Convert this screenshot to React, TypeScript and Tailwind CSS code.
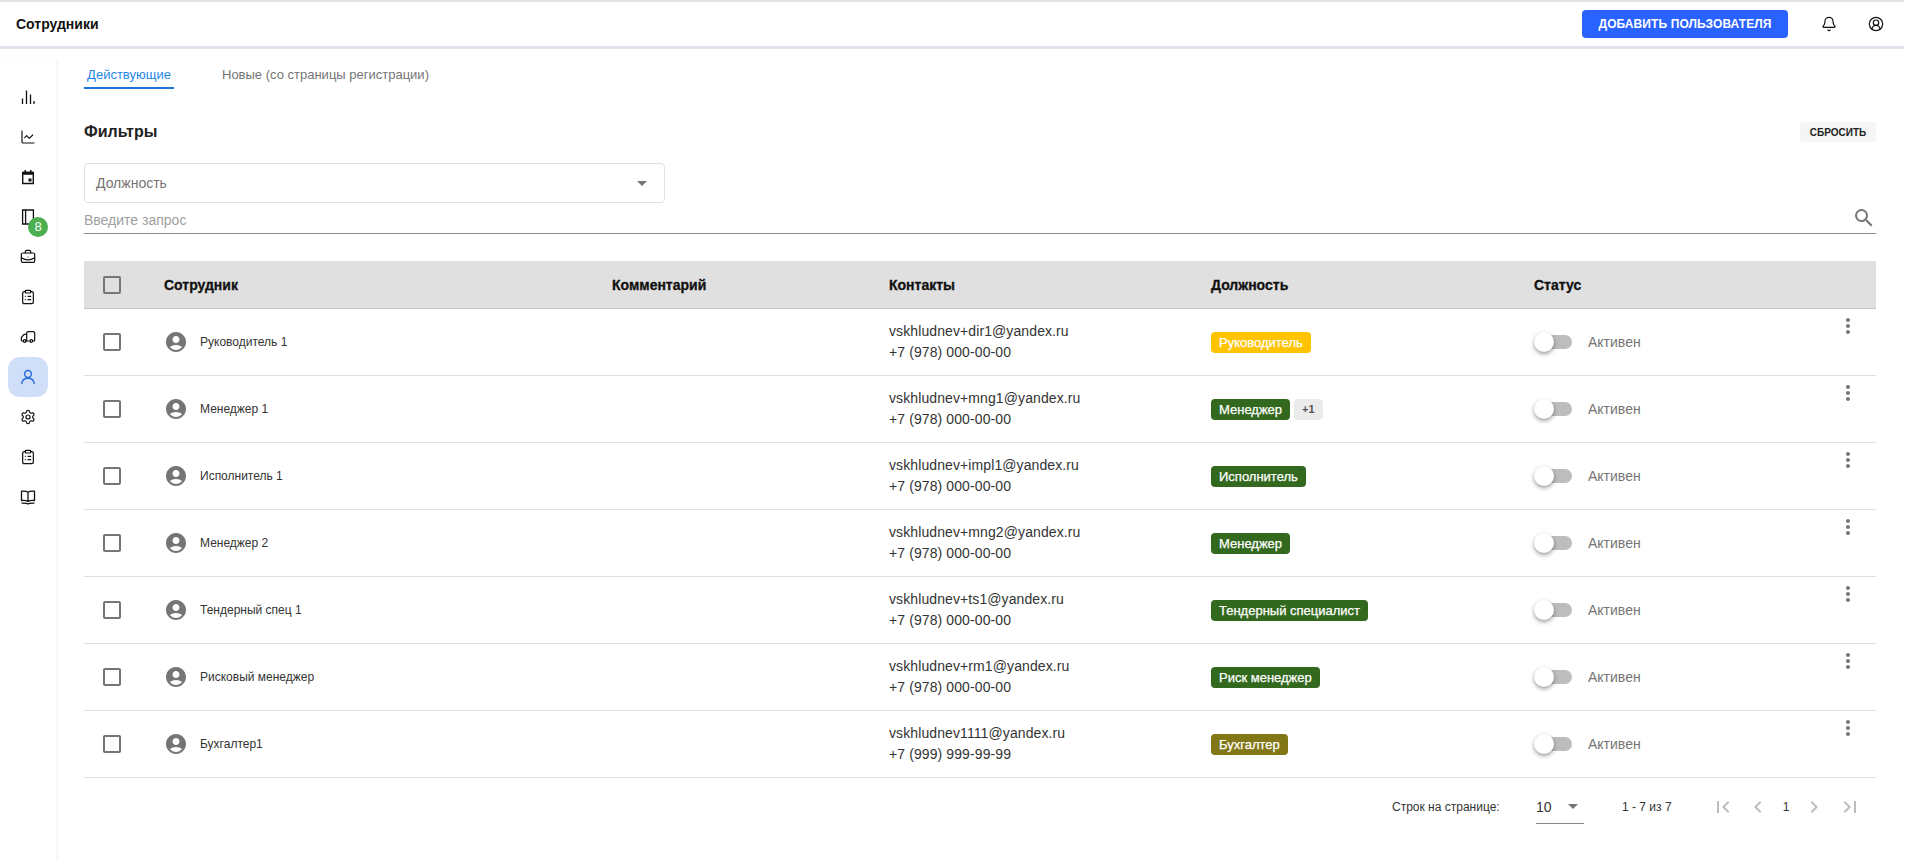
import { BriefcaseBusiness, ChartLine, ClipboardList, Settings, Truck, Bell, CircleUserRound } from "lucide-react";
import { MdAccountCircle, MdChevronLeft, MdChevronRight, MdFirstPage, MdLastPage, MdMoreVert, MdSearch } from "react-icons/md";

type Employee = {
  name: string;
  email: string;
  phone: string;
  role: string;
  color: string;
  extra?: string;
};

const employees: Employee[] = [
  { name: "Руководитель 1", email: "vskhludnev+dir1@yandex.ru", phone: "+7 (978) 000-00-00", role: "Руководитель", color: "bg-[#ffc300]" },
  { name: "Менеджер 1", email: "vskhludnev+mng1@yandex.ru", phone: "+7 (978) 000-00-00", role: "Менеджер", color: "bg-[#33691e]", extra: "+1" },
  { name: "Исполнитель 1", email: "vskhludnev+impl1@yandex.ru", phone: "+7 (978) 000-00-00", role: "Исполнитель", color: "bg-[#33691e]" },
  { name: "Менеджер 2", email: "vskhludnev+mng2@yandex.ru", phone: "+7 (978) 000-00-00", role: "Менеджер", color: "bg-[#33691e]" },
  { name: "Тендерный спец 1", email: "vskhludnev+ts1@yandex.ru", phone: "+7 (978) 000-00-00", role: "Тендерный специалист", color: "bg-[#33691e]" },
  { name: "Рисковый менеджер", email: "vskhludnev+rm1@yandex.ru", phone: "+7 (978) 000-00-00", role: "Риск менеджер", color: "bg-[#33691e]" },
  { name: "Бухгалтер1", email: "vskhludnev1111@yandex.ru", phone: "+7 (999) 999-99-99", role: "Бухгалтер", color: "bg-[#827717]" },
];

const gridCols = "grid grid-cols-[80px_448px_277px_322px_323px_1fr_40px]";

function BarsIcon() {
  return (
    <svg width="16" height="16" viewBox="0 0 16 16" fill="none" stroke="#111" strokeWidth="1.300">
      <path d="M2.500 15V9.500M6.500 15V1.500M10.500 15V5.500M14 15v-3" />
    </svg>
  );
}

function CalendarIcon() {
  return (
    <svg width="16" height="16" viewBox="0 0 16 16" fill="none">
      <path d="M2.700 3.500h10.600v11H2.700z" stroke="#111" strokeWidth="1.400" />
      <path d="M2.700 2.800h10.600v3H2.700zM4.500 1h1.400v2H4.500zM10.100 1h1.400v2h-1.400zM8.500 9.500h3v3h-3z" fill="#111" />
    </svg>
  );
}

function NotebookIcon() {
  return (
    <svg width="16" height="16" viewBox="0 0 16 16" fill="none" stroke="#111" strokeWidth="1.300">
      <path d="M2.600 1h10.800v14H2.600zM5.600 1v14" />
    </svg>
  );
}

function BookIcon() {
  return (
    <svg width="16" height="16" viewBox="0 0 16 16" fill="none" stroke="#111" strokeWidth="1.300" strokeLinejoin="round">
      <path d="M8 3.200C6.600 2.200 4.200 2 1.500 2.200v9.300c2.700-.2 5.100 0 6.500 1 1.400-1 3.800-1.200 6.500-1V2.200C11.800 2 9.400 2.200 8 3.200zM8 3.200v9.300M1.500 14.200c2.500-.3 5 0 6.500.7 1.500-.7 4-1 6.500-.7" />
    </svg>
  );
}

function UserIcon() {
  return (
    <svg width="16" height="16" viewBox="0 0 16 16" fill="none" stroke="#2a6fdb" strokeWidth="1.500" strokeLinecap="round">
      <circle cx="8" cy="5" r="3.400" />
      <path d="M1.800 14.500c.4-3.300 2.800-5.300 6.200-5.300s5.800 2 6.200 5.300" />
    </svg>
  );
}

function SideItem({ children, active, badge }: { children: React.ReactNode; active?: boolean; badge?: string }) {
  return (
    <div className={`relative flex h-10 w-10 items-center justify-center rounded-xl ${active ? "bg-[#d0dff7]" : ""}`}>
      {children}
      {badge && (
        <span className="absolute left-[20px] top-[20px] flex h-5 w-5 items-center justify-center rounded-full bg-[#4caf50] text-[13px] font-medium text-white">
          {badge}
        </span>
      )}
    </div>
  );
}

function Sidebar() {
  return (
    <aside className="flex w-[57px] shrink-0 flex-col items-center border-r border-[#f5f5f5] pt-[17px] shadow-[0_0_4px_rgba(0,0,0,0.04)]">
      <SideItem><BarsIcon /></SideItem>
      <SideItem><ChartLine size={16} strokeWidth={1.8} color="#111" /></SideItem>
      <SideItem><CalendarIcon /></SideItem>
      <SideItem badge="8"><NotebookIcon /></SideItem>
      <SideItem><BriefcaseBusiness size={16} strokeWidth={1.8} color="#111" /></SideItem>
      <SideItem><ClipboardList size={16} strokeWidth={1.8} color="#111" /></SideItem>
      <SideItem><Truck size={16} strokeWidth={1.8} color="#111" className="-scale-x-100" /></SideItem>
      <SideItem active><UserIcon /></SideItem>
      <SideItem><Settings size={16} strokeWidth={1.8} color="#111" /></SideItem>
      <SideItem><ClipboardList size={16} strokeWidth={1.8} color="#111" /></SideItem>
      <SideItem><BookIcon /></SideItem>
    </aside>
  );
}

function Checkbox() {
  return <div className="h-[18px] w-[18px] rounded-[2px] border-2 border-[#757575]" />;
}

function Toggle() {
  return (
    <div className="relative ml-[3px] h-[14px] w-[35px] rounded-full bg-[#bdbdbd]">
      <div className="absolute left-[-3px] top-[-3px] h-5 w-5 rounded-full bg-white shadow-[0_2px_4px_rgba(0,0,0,0.4)]" />
    </div>
  );
}

function Row({ e }: { e: Employee }) {
  return (
    <div className={`${gridCols} h-[67px] items-center border-b border-[#e0e0e0]`}>
      <div className="pl-[19px]"><Checkbox /></div>
      <div className="flex items-center gap-[12px]">
        <MdAccountCircle size={24} color="#757575" />
        <span className="text-xs text-[#333]">{e.name}</span>
      </div>
      <div />
      <div className="text-sm leading-[21px] tracking-[0.1px] text-[#333]">
        <div>{e.email}</div>
        <div>{e.phone}</div>
      </div>
      <div className="flex items-center gap-1">
        <span className={`rounded-[4px] px-2 text-[13px] leading-[21px] text-white [-webkit-text-stroke:0.25px_white] ${e.color}`}>{e.role}</span>
        {e.extra && <span className="rounded-[4px] bg-[#ebebeb] px-2 text-[11px] leading-[21px] font-bold text-[#555]">{e.extra}</span>}
      </div>
      <div className="flex items-center gap-[16px]">
        <Toggle />
        <span className="text-sm text-[#757575]">Активен</span>
      </div>
      <div className="self-start pt-[5px]">
        <MdMoreVert size={24} color="#757575" />
      </div>
    </div>
  );
}

export default function App() {
  return (
    <div className="h-[861px] w-[1911px] overflow-hidden bg-white pr-[7px] font-['Liberation_Sans',sans-serif]">
      <header className="flex h-[49px] items-center border-t-2 border-b-[3px] border-t-[#e5e5e5] border-b-[#e4e4f0] pl-4 pr-[20px]">
        <h1 className="flex-1 text-sm font-bold text-[#111]">Сотрудники</h1>
        <button className="mr-[33px] h-7 w-[206px] rounded-[4px] bg-[#2962ff] text-xs font-bold tracking-[0.1px] text-white">ДОБАВИТЬ ПОЛЬЗОВАТЕЛЯ</button>
        <Bell size={16} strokeWidth={1.8} color="#111" className="mr-[31px]" />
        <CircleUserRound size={16} strokeWidth={1.8} color="#111" />
      </header>

      <div className="mt-[11px] flex h-[801px]">
        <Sidebar />
        <main className="min-w-0 flex-1 pl-[27px] pr-[28px]">
          <nav className="flex text-[13px]">
            <div className="h-[29px] w-[90px] border-b-2 border-[#1976d2] pt-[5px] text-center text-[#1e88e5]">Действующие</div>
            <div className="ml-[48px] pt-[5px] text-[#757575]">Новые (со страницы регистрации)</div>
          </nav>

          <div className="mt-[33px] flex h-5 items-center justify-between">
            <h2 className="text-base font-bold text-[#222]">Фильтры</h2>
            <button className="h-5 w-[76px] rounded-[4px] bg-[#f5f5f5] text-[10px] font-bold text-[#222]">СБРОСИТЬ</button>
          </div>

          <div className="mt-[21px] flex h-10 w-[581px] items-center justify-between rounded-[4px] border border-[#e0e0e0] pl-[11px] pr-[17px] text-sm text-[#757575]">
            Должность
            <span className="h-0 w-0 border-x-[5px] border-t-[5px] border-x-transparent border-t-[#757575]" />
          </div>

          <div className="flex h-[31px] items-center justify-between border-b border-[#8a8a8a] pt-1 text-sm text-[#a0a0a0]">
            Введите запрос
            <MdSearch size={24} color="#757575" className="-mt-[4px]" />
          </div>

          <div className={`${gridCols} mt-[27px] h-[48px] items-center border-b border-[#c4c4c4] bg-[#e0e0e0] text-sm font-bold text-[#111] [-webkit-text-stroke:0.3px_#111]`}>
            <div className="pl-[19px]"><Checkbox /></div>
            <div>Сотрудник</div>
            <div>Комментарий</div>
            <div>Контакты</div>
            <div>Должность</div>
            <div>Статус</div>
            <div />
          </div>

          {employees.map((e) => (
            <Row key={e.name} e={e} />
          ))}

          <div className="flex h-[58px] items-center text-xs text-[#333]">
            <span className="ml-[1308px] w-[144px]">Строк на странице:</span>
            <div className="flex h-[34px] w-[48px] items-center justify-between border-b border-[#8a8a8a] pr-[6px] text-sm">
              10
              <span className="h-0 w-0 border-x-[5px] border-t-[5px] border-x-transparent border-t-[#757575]" />
            </div>
            <span className="ml-[38px] w-[89px]">1 - 7 из 7</span>
            <div className="flex items-center">
              <MdFirstPage size={24} color="#bdbdbd" />
              <MdChevronLeft size={24} color="#bdbdbd" className="ml-[11px]" />
              <span className="ml-[4px] w-6 text-center">1</span>
              <MdChevronRight size={24} color="#bdbdbd" className="ml-[4px]" />
              <MdLastPage size={24} color="#bdbdbd" className="ml-[12px]" />
            </div>
          </div>
        </main>
      </div>
    </div>
  );
}
